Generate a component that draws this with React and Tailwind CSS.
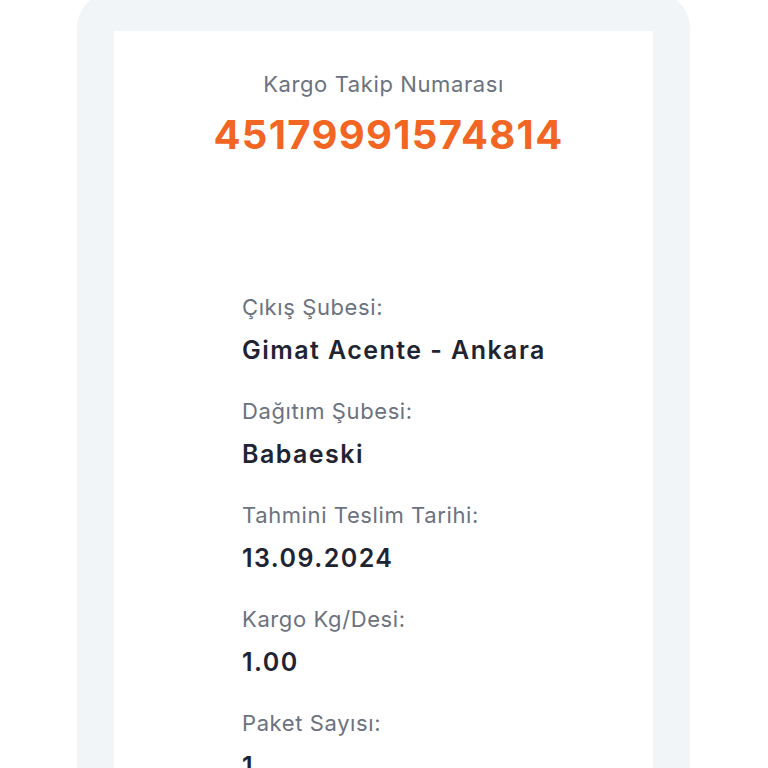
import React from "react";

const rows = [
  { label: "Çıkış Şubesi:", value: "Gimat Acente - Ankara" },
  { label: "Dağıtım Şubesi:", value: "Babaeski" },
  { label: "Tahmini Teslim Tarihi:", value: "13.09.2024" },
  { label: "Kargo Kg/Desi:", value: "1.00" },
  { label: "Paket Sayısı:", value: "1" },
];

const App = () => {
  return (
    <div className="h-[768px] w-[768px] overflow-hidden bg-white font-['Inter',sans-serif]">
      <div className="ml-[77px] mt-[-8px] w-[613px] rounded-[36px] bg-[#f2f5f8] px-[37px] pt-[39px] pb-10">
        <div className="bg-white pb-20">
          <div className="flex flex-col items-center pt-[40px]">
            <div className="text-[22px] leading-[26px] tracking-[0.6px] text-[#6b7280]">Kargo Takip Numarası</div>
            <div className="ml-[10px] mt-[14px] text-[40px] font-bold leading-[48px] tracking-[1.3px] text-[#f26522]">
              45179991574814
            </div>
          </div>
          <div className="mt-[134px] flex flex-col gap-[32px] pl-[128px]">
            {rows.map((row) => (
              <div key={row.label} className="flex flex-col gap-[14px]">
                <div className="text-[22px] leading-[28px] tracking-[0.6px] text-[#6b7280]">{row.label}</div>
                <div className="text-[25px] font-semibold leading-[30px] tracking-[1.45px] text-[#1f2433]">{row.value}</div>
              </div>
            ))}
          </div>
        </div>
      </div>
    </div>
  );
};

export default App;
